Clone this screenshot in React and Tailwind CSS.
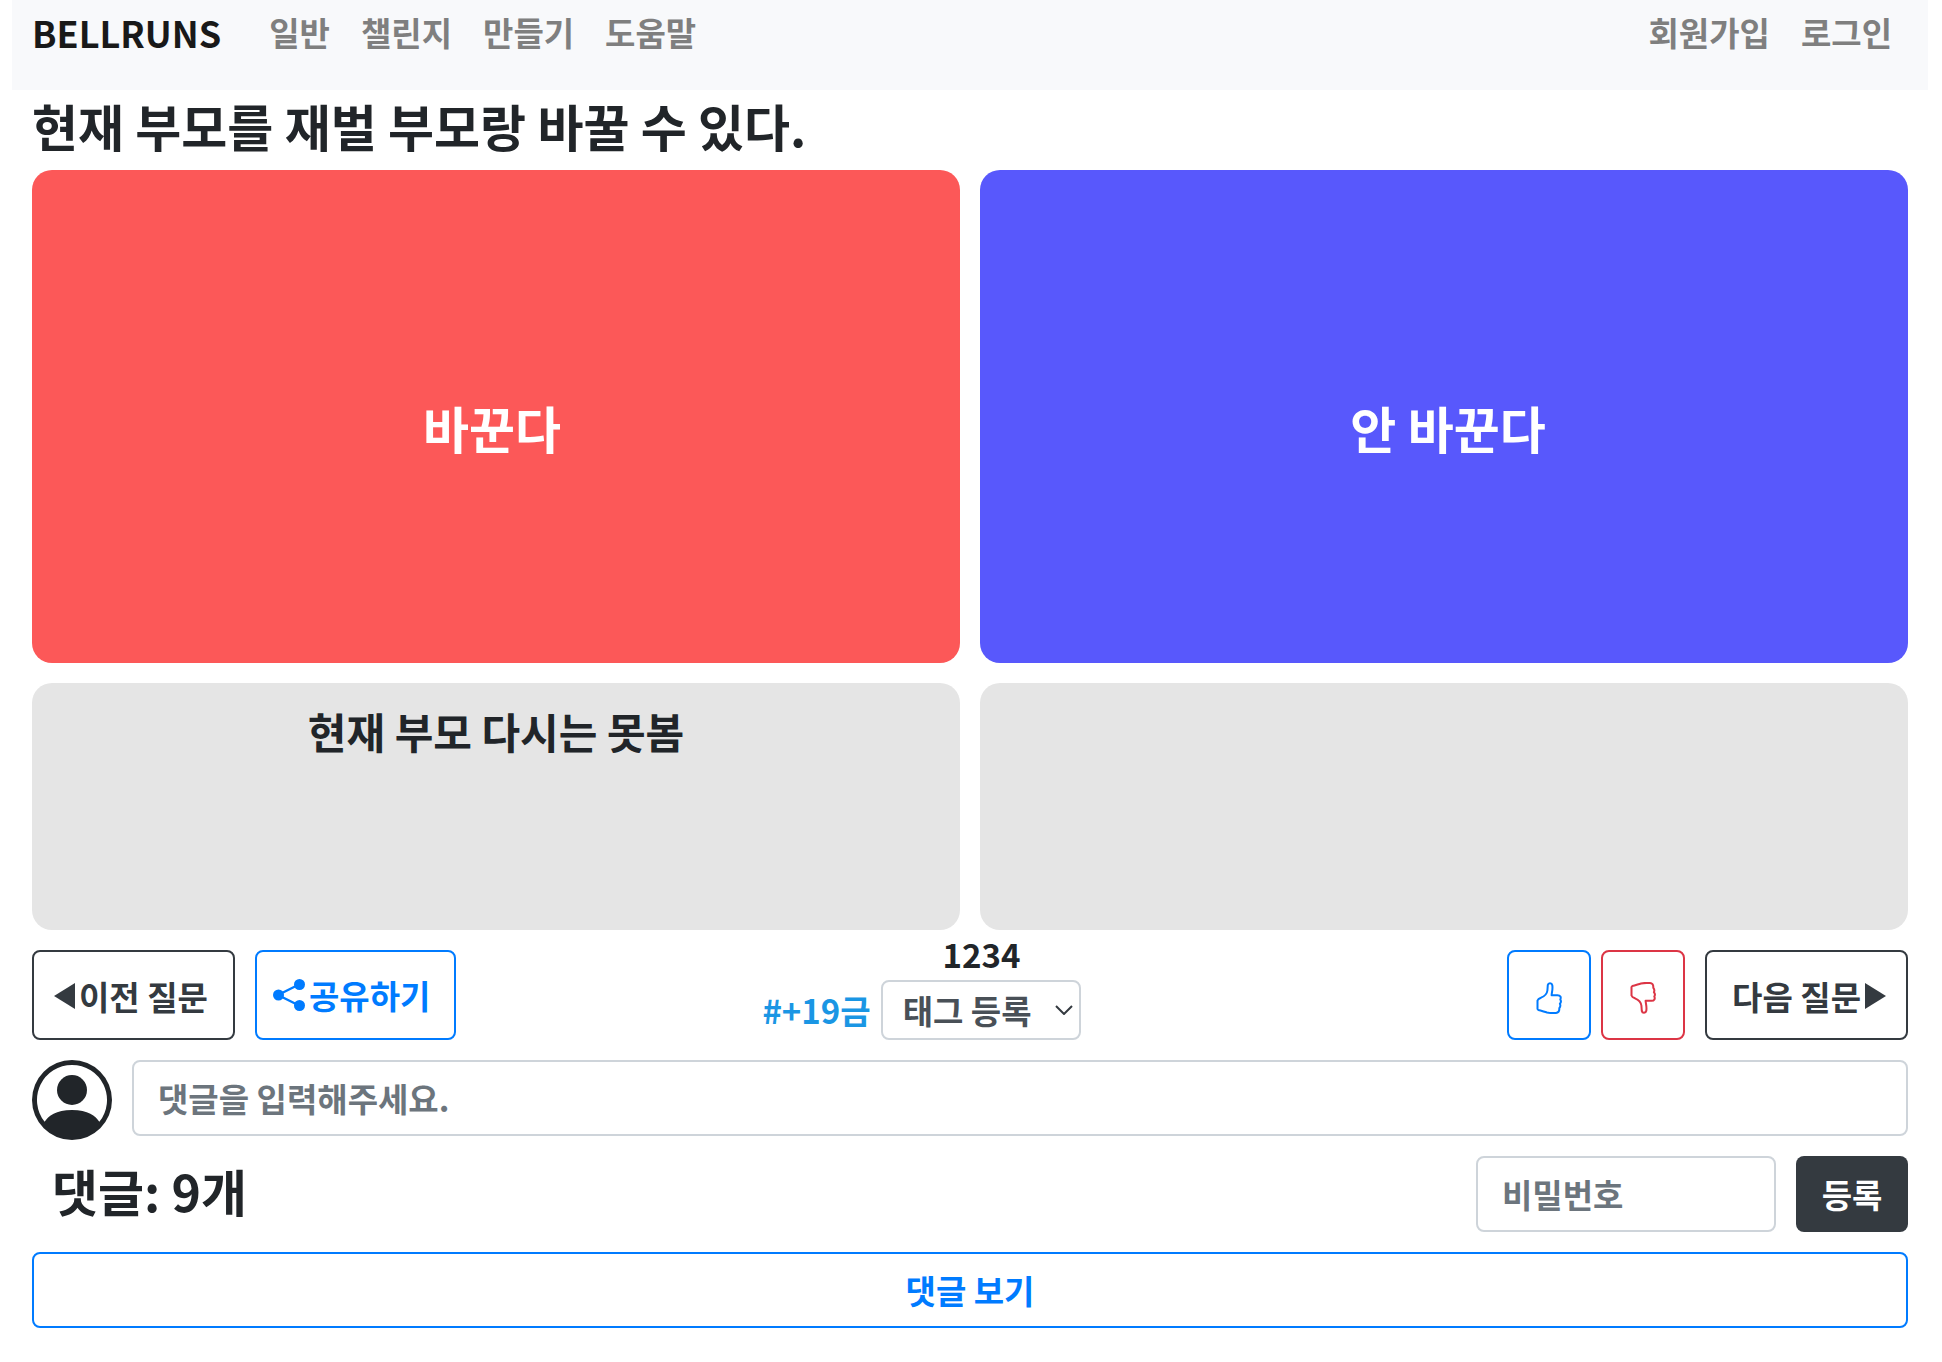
import { useState } from "react";

const NAV_LINKS = ["일반", "챌린지", "만들기", "도움말"];
const ACCOUNT_LINKS = ["회원가입", "로그인"];

const ShareIcon = () => (
  <svg viewBox="0 0 32 32" className="size-8 shrink-0" fill="currentColor" aria-hidden="true">
    <path d="M5 16 27 5M5 16 27 27" stroke="currentColor" strokeWidth="2.4" />
    <circle cx="5.500" cy="16" r="5.500" />
    <circle cx="26.500" cy="5.500" r="5.500" />
    <circle cx="26.500" cy="26.500" r="5.500" />
  </svg>
);

const AvatarIcon = () => (
  <svg viewBox="0 0 16 16" className="size-20 shrink-0" fill="currentColor" aria-hidden="true">
    <path d="M11 6a3 3 0 1 1-6 0 3 3 0 0 1 6 0z" />
    <path
      fillRule="evenodd"
      d="M0 8a8 8 0 1 1 16 0A8 8 0 0 1 0 8zm8-7a7 7 0 0 0-5.468 11.37C3.242 11.226 4.805 10 8 10s4.757 1.225 5.468 2.37A7 7 0 0 0 8 1z"
    />
  </svg>
);

const ThumbIcon = ({ down }) => (
  <svg
    viewBox="0 0 26 32"
    className={down ? "h-8 w-[26px] -scale-y-100" : "h-8 w-[26px]"}
    fill="none"
    stroke="currentColor"
    strokeWidth="2"
    strokeLinejoin="round"
    strokeLinecap="round"
    aria-hidden="true"
  >
    <path d="M1.5 18.500C2 17 3 16.500 5 15.700 8.500 14.200 11 12 11.400 8.500L11.800 3C12.300.6 15.800.6 16.300 3.200 17 7 15.800 10 15.600 13.200H21.500C24.500 13.200 25.300 15.500 24.300 17.500 25.200 19 25 20.700 23.900 21.800 24.700 23.400 24.300 25 23.300 26.200 23.500 29 22.500 30.700 20 30.900 16.500 31.200 13.500 31.100 11 30.500 7.500 29.500 5 28.500 2.300 28L1.500 27Z" />
  </svg>
);

const TriangleIcon = ({ right }) => (
  <svg viewBox="0 0 21 26" className="h-[26px] w-[21px] shrink-0" fill="currentColor" aria-hidden="true">
    <path d={right ? "M0 0 21 13 0 26Z" : "M21 0 0 13 21 26Z"} />
  </svg>
);

const NavList = ({ items }) => (
  <ul className="flex gap-[31px]">
    {items.map((item) => (
      <li key={item}>
        <a href="#" className="text-[#7f7f7f]">
          {item}
        </a>
      </li>
    ))}
  </ul>
);

const App = () => {
  const [comment, setComment] = useState("");
  const [password, setPassword] = useState("");

  return (
    <div className="bg-white pr-3.5 pb-8 pl-3 font-['Noto_Sans_CJK_KR',sans-serif] text-[33px] leading-[48px] font-bold text-[#212529]">
      <nav className="flex h-[90px] items-start justify-between bg-[#f8f9fb] px-5 pt-2">
        <div className="flex">
          <a href="#" className="mr-12 text-[36px] text-[#191919]">
            BELLRUNS
          </a>
          <NavList items={NAV_LINKS} />
        </div>
        <div className="pr-4">
          <NavList items={ACCOUNT_LINKS} />
        </div>
      </nav>

      <main className="px-5">
        <h1 className="pt-0.5 pb-3 text-[50px] leading-[66px]">
          현재 부모를 재벌 부모랑 바꿀 수 있다.
        </h1>

        <div className="grid grid-cols-2 gap-5">
          <button
            type="button"
            className="h-[493px] rounded-[20px] bg-[#fc5858] pt-5 pr-2 text-[50px] text-white"
          >
            바꾼다
          </button>
          <button
            type="button"
            className="h-[493px] rounded-[20px] bg-[#5858fc] pt-5 pl-2 text-[50px] text-white"
          >
            안 바꾼다
          </button>
          <p className="h-[247px] rounded-[20px] bg-[#e5e5e5] pt-6 text-center text-[42px]">
            현재 부모 다시는 못봄
          </p>
          <p className="h-[247px] rounded-[20px] bg-[#e5e5e5]" />
        </div>

        <div className="flex items-end justify-between">
          <div className="flex gap-5">
            <button
              type="button"
              className="flex h-[90px] w-[203px] items-center gap-1 rounded-lg border-2 border-[#343a40] pt-0.5 pl-5 whitespace-nowrap text-[#343a40]"
            >
              <TriangleIcon />
              이전 질문
            </button>
            <button
              type="button"
              className="flex h-[90px] w-[201px] items-center gap-1 rounded-lg border-2 border-[#007bff] pl-4 whitespace-nowrap text-[#007bff]"
            >
              <ShareIcon />
              공유하기
            </button>
          </div>

          <div className="flex flex-col items-center">
            <span className="pb-0.5">1234</span>
            <div className="flex items-center gap-2.5 pr-[120px]">
              <a href="#" className="text-[#1a96e4]">
                #+19금
              </a>
              <div className="relative">
                <select
                  aria-label="태그 등록"
                  className="block h-[60px] w-[200px] appearance-none rounded-lg border-2 border-[#ced4da] bg-white pl-5 text-[#495057]"
                >
                  <option>태그 등록</option>
                </select>
                <svg
                  viewBox="0 0 18 10"
                  className="pointer-events-none absolute top-[25px] right-2 h-2.5 w-[18px]"
                  fill="none"
                  stroke="#343a40"
                  strokeWidth="2"
                  aria-hidden="true"
                >
                  <path d="M1 1 9 9 17 1" />
                </svg>
              </div>
            </div>
          </div>

          <div className="flex gap-5">
            <div className="flex gap-2.5">
              <button
                type="button"
                aria-label="좋아요"
                className="flex h-[90px] w-[84px] items-center justify-center rounded-lg border-2 border-[#007bff] pt-1.5 text-[#007bff]"
              >
                <ThumbIcon />
              </button>
              <button
                type="button"
                aria-label="싫어요"
                className="flex h-[90px] w-[84px] items-center justify-center rounded-lg border-2 border-[#dc3545] pt-1.5 text-[#dc3545]"
              >
                <ThumbIcon down />
              </button>
            </div>
            <button
              type="button"
              className="flex h-[90px] w-[203px] items-center justify-end gap-1 rounded-lg border-2 border-[#343a40] pt-0.5 pr-5 whitespace-nowrap text-[#343a40]"
            >
              다음 질문
              <TriangleIcon right />
            </button>
          </div>
        </div>

        <form onSubmit={(e) => e.preventDefault()}>
          <div className="flex items-start gap-5 pt-5">
            <AvatarIcon />
            <input
              type="text"
              aria-label="댓글"
              placeholder="댓글을 입력해주세요."
              value={comment}
              onChange={(e) => setComment(e.target.value)}
              className="h-[76px] min-w-0 flex-1 rounded-lg border-2 border-[#ced4da] px-6 placeholder:text-[#6c757d]"
            />
          </div>

          <div className="flex items-center gap-5 pt-4">
            <h2 className="flex-1 pb-2 pl-5 text-[50px]">댓글: 9개</h2>
            <input
              type="password"
              aria-label="비밀번호"
              placeholder="비밀번호"
              value={password}
              onChange={(e) => setPassword(e.target.value)}
              className="h-[76px] w-[300px] rounded-lg border-2 border-[#ced4da] px-6 placeholder:text-[#6c757d]"
            />
            <button type="submit" className="h-[76px] w-28 rounded-lg bg-[#343a40] text-white">
              등록
            </button>
          </div>
        </form>

        <button
          type="button"
          className="mt-5 h-[76px] w-full rounded-lg border-2 border-[#007bff] text-[#007bff]"
        >
          댓글 보기
        </button>
      </main>
    </div>
  );
};

export default App;
